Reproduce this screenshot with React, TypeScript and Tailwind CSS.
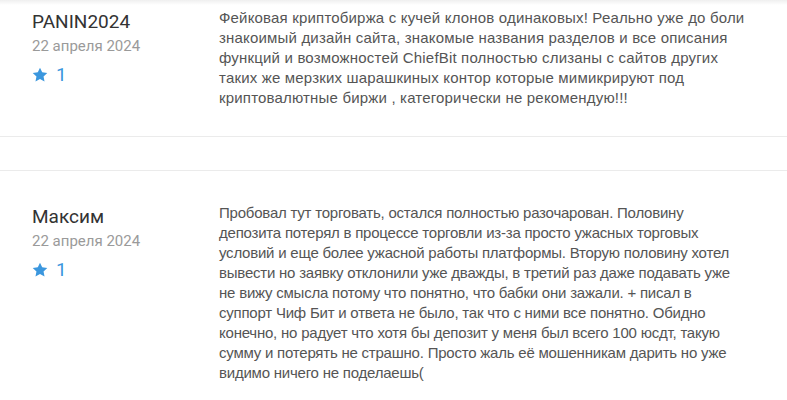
import React from "react";

type Review = {
  name: string;
  date: string;
  rating: number;
  text: string;
};

const reviews: Review[] = [
  {
    name: "PANIN2024",
    date: "22 апреля 2024",
    rating: 1,
    text: "Фейковая криптобиржа с кучей клонов одинаковых! Реально уже до боли знакоимый дизайн сайта, знакомые названия разделов и все описания функций и возможностей ChiefBit полностью слизаны с сайтов других таких же мерзких шарашкиных контор которые мимикрируют под криптовалютные биржи , категорически не рекомендую!!!",
  },
  {
    name: "Максим",
    date: "22 апреля 2024",
    rating: 1,
    text: "Пробовал тут торговать, остался полностью разочарован. Половину депозита потерял в процессе торговли из-за просто ужасных торговых условий и еще более ужасной работы платформы. Вторую половину хотел вывести но заявку отклонили уже дважды, в третий раз даже подавать уже не вижу смысла потому что понятно, что бабки они зажали. + писал в суппорт Чиф Бит и ответа не было, так что с ними все понятно. Обидно конечно, но радует что хотя бы депозит у меня был всего 100 юсдт, такую сумму и потерять не страшно. Просто жаль её мошенникам дарить но уже видимо ничего не поделаешь(",
  },
];

function Star() {
  return (
    <svg viewBox="0 0 24 24" className="h-[16px] w-[16px]" fill="#3b97de">
      <path d="M12 1l3.3 7 7.6.9-5.6 5.2 1.5 7.6L12 17.9l-6.8 3.8 1.5-7.6L1.1 8.9l7.6-.9z" />
    </svg>
  );
}

function ReviewCard({ review, first }: { review: Review; first?: boolean }) {
  return (
    <div
      className={
        "flex border-b border-[#ebebeb] bg-white " +
        (first ? "pt-[3px] pb-[28px]" : "border-t pt-[32px] pb-[20px]")
      }
    >
      <div className="w-[219px] shrink-0 pl-[32px] pt-[2px]" style={{ fontFamily: "Roboto, sans-serif" }}>
        <div className="text-[19px] leading-[24px] text-[#333]">{review.name}</div>
        <div className="mt-[2px] text-[15px] leading-[20px] text-[#9a9a9a]">{review.date}</div>
        <div className="mt-[8px] flex items-center gap-[8px]">
          <Star />
          <span className="text-[19px] leading-[22px] text-[#3b97de]">{review.rating}</span>
        </div>
      </div>
      <p
        className={
          "w-[528px] text-[15px] leading-[20px] text-[#555] " +
          (first ? "tracking-[0.18px]" : "tracking-[-0.22px]")
        }
        style={{ fontFamily: '"Liberation Sans", Arial, sans-serif' }}
      >
        {review.text}
      </p>
    </div>
  );
}

export default function App() {
  return (
    <div className="h-[400px] w-[787px] overflow-hidden bg-white">
      <div className="h-[5px] bg-gradient-to-b from-[#efefef] to-white" />
      <ReviewCard review={reviews[0]} first />
      <div className="h-[33px]" />
      <ReviewCard review={reviews[1]} />
    </div>
  );
}
